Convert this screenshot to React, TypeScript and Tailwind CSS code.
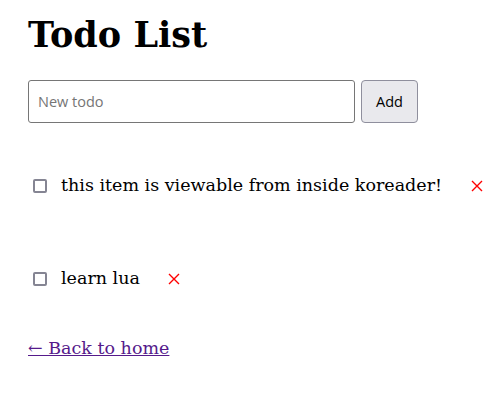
export default function App() {
  const todos = ["this item is viewable from inside koreader!", "learn lua"];

  return (
    <div className="min-h-screen bg-white px-[28px] font-['DejaVu_Serif',serif] text-black">
      <h1 className="pt-[14px] text-[35px] font-bold leading-[42px]">Todo List</h1>

      <form className="mt-[24px] flex gap-[6px]" onSubmit={(e) => e.preventDefault()}>
        <input
          type="text"
          placeholder="New todo"
          className="h-[43px] w-[327px] rounded-[3px] border border-[#767676] px-[9px] font-['Open_Sans',sans-serif] text-[14.5px] outline-none placeholder:text-[#757575]"
        />
        <button
          type="submit"
          className="h-[43px] w-[57px] rounded-[4px] border border-[#8f8f9d] bg-[#e9e9ed] font-['Open_Sans',sans-serif] text-[14.5px] text-black"
        >
          Add
        </button>
      </form>

      <ul className="mt-[16px]">
        {todos.map((todo) => (
          <li key={todo} className="flex h-[93px] items-center whitespace-nowrap">
            <input
              type="checkbox"
              className="ml-[5px] h-[14px] w-[14px] shrink-0 appearance-none rounded-[2px] border-2 border-[#858593] bg-white"
            />
            <span className="ml-[14px] shrink-0 text-[17.5px]">{todo}</span>
            <button className="ml-[28px] flex h-[13px] w-[13px] shrink-0 items-center justify-center">
              <svg width="12" height="12" viewBox="0 0 12 12">
                <path d="M1 1 L11 11 M11 1 L1 11" stroke="#ff0000" strokeWidth="1.4" />
              </svg>
            </button>
          </li>
        ))}
      </ul>

      <a href="#" className="mt-[10px] inline-block text-[17.5px] text-[#551a8b] underline">
        ← Back to home
      </a>
    </div>
  );
}
